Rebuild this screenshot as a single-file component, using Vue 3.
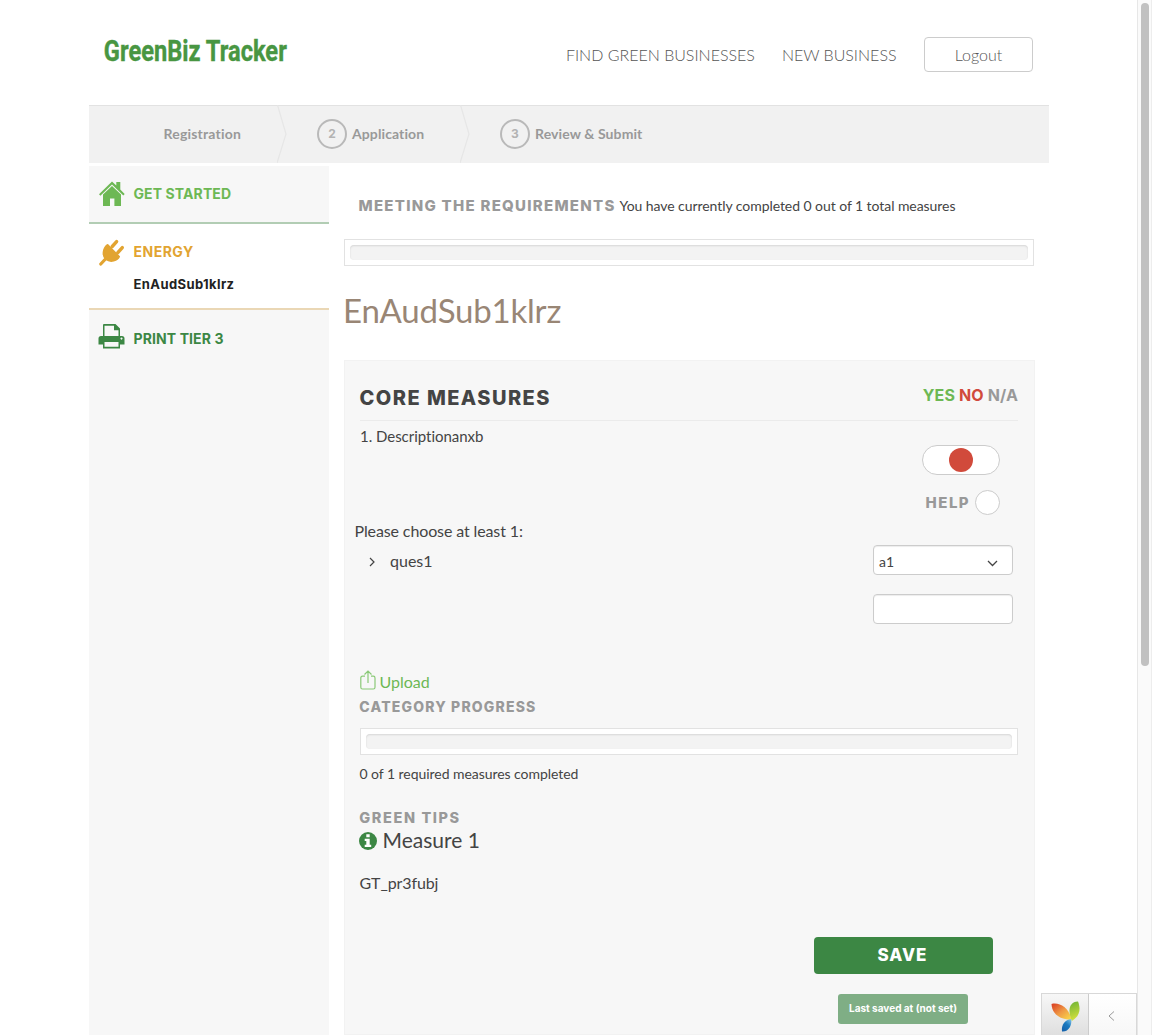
<script setup>
const steps = [
  { label: 'Registration' },
  { number: 2, label: 'Application' },
  { number: 3, label: 'Review & Submit' },
]
</script>

<template>
  <div class="page">
    <div class="container">
      <header class="header">
        <svg class="logo" width="190" height="44" viewBox="0 0 230 44" preserveAspectRatio="none" aria-label="GreenBiz Tracker">
          <text x="1" y="31" textLength="221.500" lengthAdjust="spacingAndGlyphs">GreenBiz Tracker</text>
        </svg>
        <nav class="nav">
          <a class="find">FIND GREEN BUSINESSES</a>
          <a class="new">NEW BUSINESS</a>
          <button class="logout">Logout</button>
        </nav>
      </header>

      <div class="steps">
        <div v-for="(step, i) in steps" :key="step.label" class="step" :class="'step-' + i">
          <span v-if="step.number" class="circle">{{ step.number }}</span>
          <span class="step-label">{{ step.label }}</span>
          <svg v-if="i < 2" class="chevron" width="10" height="58" viewBox="0 0 10 58">
            <path d="M.5 0 L9 29 L0 58" fill="none" stroke="#e6e6e6" stroke-width="1.200" />
          </svg>
        </div>
      </div>

      <div class="columns">
        <aside class="sidebar">
          <div class="item start">
            <svg width="26" height="26" viewBox="0 0 26 26" fill="#6db854">
              <path d="M0 13.200 L13 .4 L17.300 4.600 V1 H21.300 V8.600 L25.700 13 L24.300 14.400 L13 3.400 L1.400 14.700 Z" />
              <path d="M4 13.600 L13 5 L22 13.600 V25 H15.400 V17.400 H11 V25 H4 Z" />
            </svg>
            <span>GET STARTED</span>
          </div>
          <div class="item energy">
            <div class="row">
              <svg width="26" height="27" viewBox="0 0 26 27" fill="none" stroke="#e2a431" stroke-linecap="round">
                <path d="M13.200 7.500 L17.600 2.600 M18.800 13.700 L23.300 8.600" stroke-width="3.400" />
                <path d="M6 20.500 L1.800 25" stroke-width="3.200" />
                <path d="M8.500 6 L20 17.700 C18.500 21.500 11.500 23.500 7.200 20.300 C3.200 17 4 9.500 8.500 6 Z" fill="#e2a431" stroke-width="2" stroke-linejoin="round" />
              </svg>
              <span>ENERGY</span>
            </div>
            <a class="sub">EnAudSub1klrz</a>
          </div>
          <div class="item print">
            <svg width="27" height="25" viewBox="0 0 27 25">
              <path fill="#3c8744" fill-rule="evenodd" d="M6 0 H17.500 L22 4.500 V12 H24 Q26.500 12 26.500 14.500 V20.500 H22 V24.500 H5 V20.500 H.5 V14.500 Q.5 12 3 12 H5 V1 Q5 0 6 0 Z M6.500 1.700 V12 H20.500 V6.200 H16 V1.700 Z M6.500 18 V22.800 H20.500 V18 Z M23.500 13.500 A1 1 0 1 0 23.510 13.500 Z" />
            </svg>
            <span>PRINT TIER 3</span>
          </div>
        </aside>

        <main class="main">
          <div class="meeting"><span class="mont">MEETING THE REQUIREMENTS</span><span class="status">You have currently completed 0 out of 1 total measures</span></div>
          <div class="progress"><div class="track"></div></div>
          <h1>EnAudSub1klrz</h1>

          <section class="card">
            <div class="card-head">
              <h2>CORE MEASURES</h2>
              <div class="legend"><span class="yes">YES</span><span class="no">NO</span><span class="na">N/A</span></div>
            </div>
            <div class="measure">
              <p class="description">1. Descriptionanxb</p>
              <div class="controls">
                <div class="toggle"><i></i></div>
                <div class="help"><span>HELP</span><i></i></div>
              </div>
            </div>
            <p class="choose">Please choose at least 1:</p>
            <div class="question">
              <svg class="caret" width="7" height="10" viewBox="0 0 7 10"><path d="M1 1 L5 5 L1 9" fill="none" stroke="#444" stroke-width="1.200" /></svg>
              <span class="qname">ques1</span>
              <div class="fields">
                <div class="field">
                  <span>a1</span>
                  <svg width="11" height="7" viewBox="0 0 11 7"><path d="M1 1 L5.500 5.500 L10 1" fill="none" stroke="#444" stroke-width="1.300" /></svg>
                </div>
                <input class="field" type="text">
              </div>
            </div>
            <a class="upload">
              <svg width="16" height="20" viewBox="0 0 16 20" fill="none" stroke="#8ac977" stroke-width="1.200">
                <path d="M5 6.200 H2.500 Q.8 6.200 .8 8 V17.200 Q.8 19 2.500 19 H13.300 Q15 19 15 17.200 V8 Q15 6.200 13.300 6.200 H11 M8 13 V1 M4.500 4.500 L8 1 L11.500 4.500" />
              </svg>
              <span>Upload</span>
            </a>
            <h3 class="cat">CATEGORY PROGRESS</h3>
            <div class="progress inner"><div class="track"></div></div>
            <p class="completed">0 of 1 required measures completed</p>
            <h3 class="tips">GREEN TIPS</h3>
            <div class="tip">
              <svg width="18" height="18" viewBox="0 0 18 18">
                <circle cx="9" cy="9" r="9" fill="#3c8744" />
                <path fill="#fff" d="M7.300 2.300 H10.700 V5.200 H7.300 Z M5.700 6.700 H10.700 V12.800 H12.200 V15 H5.700 V12.800 H7.300 V8.900 H5.700 Z" />
              </svg>
              <span>Measure 1</span>
            </div>
            <p class="tiptext">GT_pr3fubj</p>
            <div class="actions">
              <button class="save">SAVE</button>
              <div class="saved"><span>Last saved at (not set)</span></div>
            </div>
          </section>
        </main>
      </div>
    </div>

    <div class="debug">
      <div class="yii">
        <svg width="29" height="31" viewBox="0 0 29 31">
          <defs>
            <linearGradient id="yo" x1="0" y1="0" x2="1" y2="1"><stop offset="0" stop-color="#d93a21" /><stop offset=".5" stop-color="#ef9a45" /><stop offset="1" stop-color="#fbe04a" /></linearGradient>
            <linearGradient id="yg" x1="0.300" y1="0" x2=".5" y2="1"><stop offset="0" stop-color="#72b536" /><stop offset="1" stop-color="#d8e23c" /></linearGradient>
            <linearGradient id="yb" x1="1" y1="0" x2=".3" y2="1"><stop offset="0" stop-color="#8ac8ea" /><stop offset=".5" stop-color="#1c7bc0" /><stop offset="1" stop-color="#1664ad" /></linearGradient>
          </defs>
          <path d="M.5 3 C8 1 18 6 20.500 19 C10 18.500 1 14 .5 3Z" fill="url(#yo)" />
          <path d="M27 .5 C30 8 29 15 20.800 20 C17 11 17 1 27 .5Z" fill="url(#yg)" />
          <path d="M20.300 18 C21 24 18 31 11 30.500 C10 24 14 18.500 20.300 18Z" fill="url(#yb)" />
        </svg>
      </div>
      <div class="collapse">
        <svg width="7" height="10" viewBox="0 0 7 10"><path d="M6 .5 L1 5 L6 9.500" fill="none" stroke="#999" stroke-width="1" /></svg>
      </div>
    </div>
    <div class="scrollbar"><div class="thumb"></div></div>
  </div>
</template>

<style>
html, body { margin: 0; overflow: hidden; background: #fff; }
</style>

<style scoped>
* { box-sizing: border-box; }
p, h1, h2, h3 { margin: 0; font-weight: 400; }
svg { display: block; flex: none; }
.page { position: relative; width: 1152px; height: 1035px; overflow: hidden; font-family: Lato, sans-serif; color: #444; white-space: nowrap; }
.container { width: 960px; margin-left: 89px; height: 1035px; display: flex; flex-direction: column; }
.header { height: 105px; display: flex; justify-content: space-between; padding: 30px 16px 0 14px; }
.logo { overflow: visible; }
.logo text { font: 700 29px Roboto, sans-serif; fill: #489642; stroke: #489642; stroke-width: .4; }
.nav { display: flex; height: 40px; margin-top: 4px; align-items: center; font-size: 16px; font-weight: 300; color: #555; }
.find { margin-right: 27px; }
.new { margin-right: 27.500px; }
.logout { width: 109px; height: 35px; border: 1px solid #ccc; border-radius: 4px; background: #fff; font: 300 16px/33px Lato, sans-serif; color: #555; padding: 0; }

.steps { height: 58px; background: #f1f1f1; border-top: 1px solid #e2e2e2; display: flex; }
.step { display: flex; align-items: center; height: 56px; font-size: 14px; font-weight: 700; letter-spacing: .1px; color: #999; }
.step-label { margin-top: -1px; }
.step-0 { width: 198px; padding-left: 74.500px; letter-spacing: .2px; }
.step-1 { width: 183px; padding-left: 30px; }
.step-2 { padding-left: 30px; }
.chevron { margin-left: auto; }
.circle { width: 30px; height: 30px; border: 2px solid #b9b9b9; border-radius: 50%; text-align: center; font: 700 12px/26px Inter, sans-serif; color: #b3b3b3; margin-right: 5px; }

.columns { display: flex; flex: 1; padding-top: 3px; }
.sidebar { width: 240px; background: #f7f7f7; font: 700 14px Inter, sans-serif; }
.item { padding-left: 10px; display: flex; }
.item span { margin: -2px 0 0 8.500px; letter-spacing: .1px; }
.start { height: 58px; border-bottom: 2px solid #b2cdb4; color: #6db854; align-items: center; }
.energy { height: 86px; background: #fff; border-bottom: 2px solid #ead7b5; color: #e2a431; flex-direction: column; padding-top: 15px; }
.energy .row span { letter-spacing: .5px; }
.row { display: flex; align-items: center; }
.sub { color: #222; font-size: 13px; line-height: 18px; letter-spacing: .4px; margin: 9px 0 0 34.500px; }
.print { color: #3c8744; padding: 14px 0 0 9px; align-items: center; }
.print span { margin-top: 4px; }

.main { width: 691px; margin-left: 15px; display: flex; flex-direction: column; }
.mont, .help span, h3 { font-family: Inter, sans-serif; font-weight: 800; color: #999; }
.meeting { height: 73px; padding: 30px 0 0 14.500px; line-height: 20px; display: flex; }
.mont { font-size: 15px; letter-spacing: 1.270px; width: 261px; }
.status { font-size: 14px; letter-spacing: -.06px; }
.progress { width: 690px; height: 27px; border: 1px solid #e2e2e2; background: #fff; padding: 5px; flex: none; }
.track { height: 15px; border-radius: 4px; background: #f3f3f3; box-shadow: inset 0 1px 2px rgba(0, 0, 0, .12); }
h1 { font-size: 33px; letter-spacing: -.2px; line-height: 40px; color: #998675; margin: 24px 0 0 -1px; height: 70px; }
.card { width: 691px; flex: 1; background: #f7f7f7; border: 1px solid #f2f2f2; padding: 0 16px 0 15px; display: flex; flex-direction: column; }
.card-head { height: 60px; border-bottom: 1px solid #ebebeb; display: flex; justify-content: space-between; padding-top: 24px; line-height: 26px; }
h2 { font: 800 20px/26px Inter, sans-serif; letter-spacing: 1.450px; margin-left: -.5px; }
.legend { display: flex; gap: 4px; font: 700 16px/21px Inter, sans-serif; letter-spacing: .1px; }
.yes { color: #6db854; }
.no { color: #d14a3b; }
.na { color: #999; }
.measure { display: flex; justify-content: space-between; height: 100px; }
.description { font-size: 15px; line-height: 20px; margin-top: 5px; letter-spacing: -.03px; }
.controls { width: 96px; padding-top: 24px; }
.toggle { width: 78px; height: 30px; border: 1px solid #ccc; border-radius: 15px; background: #fff; padding: 2px 26px; }
.toggle i { display: block; width: 24px; height: 24px; border-radius: 50%; background: #d14a3b; }
.help { width: 78px; margin-top: 15px; display: flex; justify-content: space-between; align-items: center; padding-left: 3.500px; }
.help span { font-size: 15px; letter-spacing: 1.500px; }
.help i { width: 25px; height: 25px; border: 1px solid #ccc; border-radius: 50%; background: #fff; }
.choose { font-size: 16px; letter-spacing: -.12px; line-height: 20px; margin: 0 0 0 -5.500px; }
.question { height: 129px; display: flex; padding: 4px 5px 0 9px; }
.caret { margin-top: 12px; }
.qname { font-size: 16px; line-height: 20px; margin: 6px 0 0 14px; }
.fields { margin-left: auto; display: flex; flex-direction: column; gap: 19px; }
.field { width: 140px; height: 30px; border: 1px solid #ccc; border-radius: 4px; background: #fff; box-shadow: inset 0 1px 1px rgba(0, 0, 0, .075); display: flex; justify-content: space-between; align-items: center; font-size: 14px; padding: 3px 14px 0 5px; }
.field svg { margin-top: 4px; }
.upload { display: flex; height: 27px; color: #6db854; font-size: 16px; margin-left: -.5px; }
.upload span { margin: 1px 0 0 4px; line-height: 21px; }
h3 { font-size: 14px; line-height: 20px; letter-spacing: 1.170px; margin-left: -.7px; }
.inner { width: 658px; margin: 11px 0 0; }
.completed { font-size: 14px; line-height: 20px; margin-top: 9px; letter-spacing: -.05px; margin-left: -.5px; }
.tips { margin-top: 24px; font-size: 14.500px; letter-spacing: 1.600px; }
.tip { display: flex; align-items: center; height: 25px; font-size: 21px; margin-left: -1px; }
.tip span { margin: -3px 0 0 5.500px; }
.tiptext { font-size: 16px; letter-spacing: -.1px; line-height: 20px; margin: 20px 0 0 -.5px; }
.actions { width: 179px; margin: 44px 0 0 454px; display: flex; flex-direction: column; align-items: center; }
.save { width: 179px; height: 37px; border: 0; border-radius: 4px; background: #3c8744; color: #fff; font: 800 17px Inter, sans-serif; letter-spacing: 1px; padding: 0 2px 2px 0; }
.saved { width: 130px; height: 30px; margin: 20px 1px 0 0; border-radius: 3px; background: #7fae85; color: #fff; font: 700 10px/28px Inter, sans-serif; text-align: center; }

.debug { position: absolute; left: 1041px; top: 993px; width: 96px; height: 42px; border: 1px solid #d8d8d8; border-bottom: 0; display: flex; }
.yii { width: 47px; border-right: 1px solid #ccc; background: linear-gradient(#f7f7f7, #dfdfdf); padding: 7px 0 0 9px; }
.collapse { flex: 1; background: linear-gradient(#fff, #f7f7f7); padding: 17px 0 0 19px; }
.scrollbar { position: absolute; left: 1137px; top: 0; width: 15px; height: 1035px; background: #fafafa; border-left: 1px solid #e7e7e7; border-right: 1px solid #ededed; padding: 3px 0 0 3px; }
.thumb { width: 8px; height: 663px; border-radius: 4px; background: #c1c1c1; }
</style>
